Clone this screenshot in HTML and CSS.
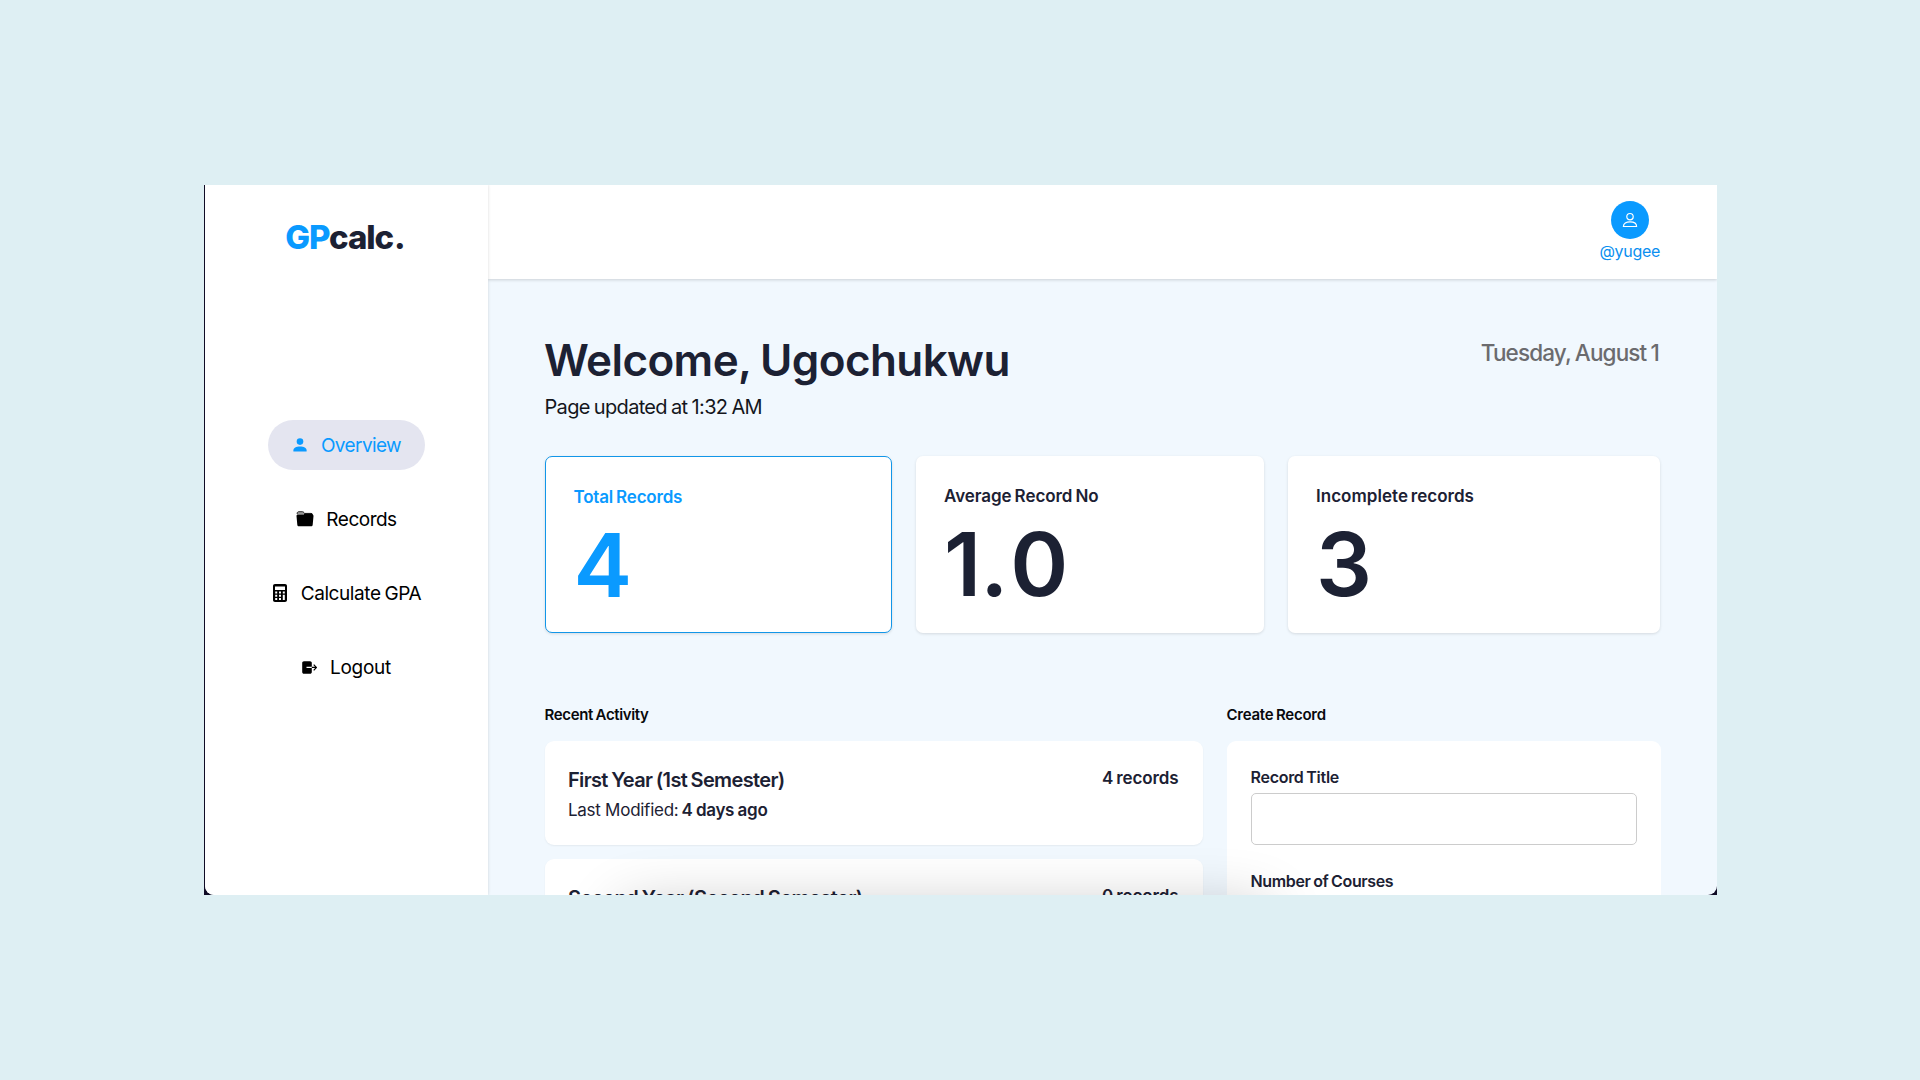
FILE: index.html
```
<!DOCTYPE html>
<html lang="en">
<head>
<meta charset="utf-8">
<title>GPcalc</title>
<link rel="stylesheet" href="styles.css">
</head>
<body>
<div class="window">
  <div class="app">
    <aside class="sidebar">
      <div class="logo"><span class="logo-accent">GP</span>calc<span class="logo-dot">.</span></div>
      <nav class="nav">
        <a class="nav-item active"><svg viewBox="0 0 14 14" width="14" height="14"><circle cx="7" cy="3.600" r="3.300"/><path d="M.4 13.600v-1.200C.4 10 3.200 8.500 7 8.500s6.600 1.500 6.600 3.900v1.200z"/></svg><span class="t-overview">Overview</span></a>
        <a class="nav-item"><svg viewBox="0 0 18 16" width="18" height="16"><path d="M1.200 3.300V2.200C1.200 1.300 1.900.7 2.800.7h3.500c.8 0 1.200.3 1.700.9l.7.800H15c.9 0 1.500.5 1.600 1.300z" fill="#999"/><path d="M1.200 3V2.200C1.200 1.300 1.900.7 2.800.7h3.500c.8 0 1.200.3 1.700.9l.7.800H15c.9 0 1.500.5 1.600 1.300" fill="none" stroke="#000" stroke-width=".8"/><path d="M8 2.400h7c.9 0 1.500.5 1.600 1.300H8zM2 3.400h14c1 0 1.600.7 1.500 1.600l-.8 8.700c-.1 1-.8 1.600-1.700 1.600H3c-.9 0-1.600-.6-1.700-1.600L.5 5C.4 4.100 1 3.400 2 3.400z"/></svg><span class="t-records">Records</span></a>
        <a class="nav-item"><svg viewBox="0 0 14 18" width="14" height="18"><path fill-rule="evenodd" d="M2 0h10c1.200 0 2 .8 2 2v14c0 1.200-.8 2-2 2H2c-1.200 0-2-.8-2-2V2C0 .8.800 0 2 0zM2 2.500v3.500h10V2.500zM2.200 7.500v2h2v-2zm3.800 0v2h2v-2zm3.800 0v2h2v-2zM2.200 10.800v2h2v-2zm3.800 0v2h2v-2zm3.800 0v5.200h2v-5.200zM2.200 14v2h2v-2zM6 14v2h2v-2z"/></svg><span class="t-calc">Calculate GPA</span></a>
        <a class="nav-item"><svg viewBox="0 0 15 13" width="15" height="13"><path d="M2 .3h6c1.100 0 1.800.7 1.800 1.800v3.700H4.500v1.300h5.300v3.800c0 1.100-.7 1.800-1.800 1.800H2C.9 12.700.2 12 .2 10.900V2.100C.2 1 .9.300 2 .3z"/><path d="M9.800 6.450h4.400M11.700 3.600l2.700 2.850-2.700 2.850" fill="none" stroke="#000" stroke-width="1.200"/></svg><span class="t-logout">Logout</span></a>
      </nav>
    </aside>
    <div class="main">
      <header class="topbar">
        <div class="profile">
          <div class="avatar"><svg viewBox="0 0 16 16" width="16" height="16"><circle cx="8" cy="4.700" r="3.200"/><path d="M1.400 14.500c0-3 2.800-4.700 6.600-4.700s6.600 1.700 6.600 4.700z"/></svg></div>
          <span class="handle">@yugee</span>
        </div>
      </header>
      <main class="content">
        <div class="intro">
          <div>
            <h1 class="welcome">Welcome, Ugochukwu</h1>
            <p class="updated">Page updated at 1:32 AM</p>
          </div>
          <p class="date">Tuesday, August 1</p>
        </div>
        <section class="stats">
          <div class="stat selected"><h2 class="t-total">Total Records</h2><strong>4</strong></div>
          <div class="stat"><h2 class="t-average">Average Record No</h2><strong>1<span class="point">.</span>0</strong></div>
          <div class="stat"><h2 class="t-incomplete">Incomplete records</h2><strong>3</strong></div>
        </section>
        <div class="columns">
          <section class="activity">
            <h3 class="t-recent">Recent Activity</h3>
            <article class="record">
              <div><h4>First Year (1st Semester)</h4><p class="modified"><span>Last Modified:</span><b>4 days ago</b></p></div>
              <span class="count">4 records</span>
            </article>
            <article class="record">
              <div><h4 class="t-second">Second Year (Second Semester)</h4></div>
              <span class="count">0 records</span>
            </article>
          </section>
          <section class="create">
            <h3>Create Record</h3>
            <form class="form">
              <label for="title">Record Title</label>
              <input class="field" id="title" type="text">
              <label class="t-courses">Number of Courses</label>
            </form>
          </section>
        </div>
      </main>
    </div>
  </div>
</div>
</body>
</html>
```
FILE: styles.css
```
* { box-sizing: border-box; margin: 0; }
body { height: 1080px; padding: 185px 0 0 204px; background: #deeff3; font-family: Inter, "Liberation Sans", sans-serif; color: #1c2133; overflow: hidden; }
h1, h2, h3, h4, p, strong, span, label { white-space: nowrap; }

.window { width: 1513px; height: 710px; padding-left: 1px; background: #100b25; }
.app { position: relative; display: flex; height: 710px; overflow: hidden; border-radius: 0 0 9px 9px; background: #f1f8fe; }
.app::after { content: ""; position: absolute; left: 430px; top: 735px; width: 620px; height: 60px; box-shadow: 0 0 60px 12px rgba(0, 0, 0, .24); }

.sidebar { flex: none; width: 283px; padding-top: 30px; background: #fff; box-shadow: 0 0 3px rgba(0, 0, 0, .15); text-align: center; z-index: 1; }
.logo { height: 44px; line-height: 44px; padding-right: 2px; font-size: 33px; font-weight: 800; letter-spacing: -1.100px; }
.logo-accent { color: #0a9aff; }
.logo-dot { margin-left: 1px; letter-spacing: 0; }
.nav { display: flex; flex-direction: column; align-items: center; gap: 24px; margin-top: 161px; }
.nav-item { display: flex; align-items: center; gap: 14px; height: 50px; padding: 0 24px 0 25px; border-radius: 25px; font-size: 19px; color: #000; }
.nav-item svg { fill: currentColor; }
.active { background: #e4e5f0; color: #0a9aff; }
.t-overview { letter-spacing: -.600px; }
.t-records { letter-spacing: -.500px; margin: 0 1px 0 -2px; }
.t-calc { letter-spacing: -.420px; word-spacing: -1px; }
.t-logout { letter-spacing: -.250px; margin: 0 1px 0 -1px; }

.main { flex: 1; min-width: 0; }
.topbar { display: flex; justify-content: flex-end; height: 94px; padding: 16px 57px 0 0; background: #fff; box-shadow: 0 1px 3px rgba(0, 0, 0, .16); }
.profile { display: flex; flex-direction: column; align-items: center; color: #0a8ff0; font-size: 16px; }
.avatar { display: flex; align-items: center; justify-content: center; width: 38px; height: 38px; border-radius: 50%; background: #0a9aff; }
.avatar svg { fill: none; stroke: #fff; stroke-width: 1.200; }
.handle { line-height: 24px; letter-spacing: -.300px; }

.content { padding: 54px 57px 0 56.500px; }
.intro { display: flex; justify-content: space-between; height: 123px; }
.welcome { line-height: 54px; margin-left: -.500px; font-size: 44px; font-weight: 570; letter-spacing: -.600px; word-spacing: -1px; }
.updated { line-height: 24px; margin-top: 8px; font-size: 20px; color: #14161c; letter-spacing: -.680px; word-spacing: -.800px; }
.date { line-height: 40px; margin-right: 1px; font-size: 22.500px; font-weight: 500; color: #6b6b6e; letter-spacing: -.860px; word-spacing: -1px; }

.stats { display: grid; grid-template-columns: 347.500px 348px 1fr; grid-template-rows: 177px; gap: 24px; }
.stat { padding: 28px; border-radius: 7px; background: #fff; box-shadow: 0 1px 3px rgba(0, 0, 0, .12); }
.stat h2 { line-height: 25px; font-size: 17px; font-weight: 560; }
.stat strong { display: block; line-height: 110px; font-size: 88px; font-weight: 580; }
.selected { border: 1.500px solid #1296e8; color: #0a9aff; }
.t-total { letter-spacing: -.200px; word-spacing: -1px; }
.t-average { letter-spacing: -.080px; word-spacing: -1px; }
.t-incomplete { letter-spacing: .030px; word-spacing: -1.500px; }
.point { margin: 0 2px 0 -1px; }

.columns { display: grid; grid-template-columns: 658px 1fr; gap: 24px; margin-top: 70px; }
.columns h3 { line-height: 23px; margin-bottom: 15px; font-size: 15px; font-weight: 600; color: #08090c; letter-spacing: -.260px; word-spacing: -.800px; }
.columns .t-recent { letter-spacing: -.350px; }
.record { display: flex; justify-content: space-between; height: 104px; margin-bottom: 14px; padding: 24px; border-radius: 9px; background: #fff; box-shadow: 0 1px 2px rgba(0, 0, 0, .06); }
.record h4 { line-height: 30px; margin-left: -.500px; font-size: 20px; font-weight: 570; letter-spacing: -.640px; word-spacing: -1px; }
.record .t-second { letter-spacing: -.520px; }
.modified { display: flex; gap: 3px; line-height: 31px; margin-left: -.500px; font-size: 17px; letter-spacing: -.270px; }
.modified b { font-weight: 600; letter-spacing: -.300px; word-spacing: -.500px; }
.count { line-height: 27px; font-size: 17px; font-weight: 560; letter-spacing: -.120px; word-spacing: -1px; }
.form { display: flex; flex-direction: column; align-items: flex-start; height: 300px; padding: 24px; border-radius: 9px; background: #fff; }
.form label { line-height: 24px; font-size: 16px; font-weight: 560; letter-spacing: -.280px; word-spacing: -1px; }
.form .t-courses { letter-spacing: -.360px; }
.field { width: 386px; height: 52px; margin: 4px 0 24px; border: 1px solid #ccc; border-radius: 5px; background: #fff; }
```
